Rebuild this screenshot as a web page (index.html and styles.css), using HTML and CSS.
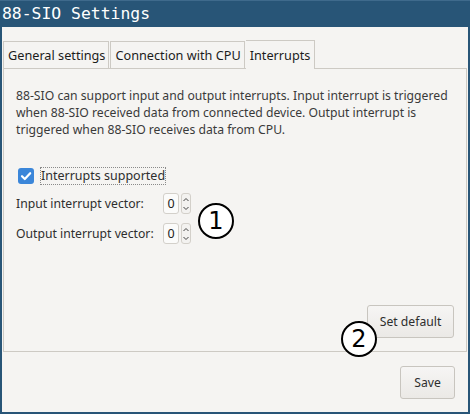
FILE: index.html
```html
<!DOCTYPE html>
<html>
<head>
<meta charset="utf-8">
<link rel="stylesheet" href="styles.css">
</head>
<body>
<div class="window">
  <div class="titlebar">88-SIO Settings</div>
  <div class="content">
    <div class="tabs">
      <div class="tab">General settings</div>
      <div class="tab">Connection with CPU</div>
      <div class="tab active">Interrupts</div>
    </div>
    <div class="pane">
      <p class="desc">88-SIO can support input and output interrupts. Input interrupt is triggered when 88-SIO received data from connected device. Output interrupt is triggered when 88-SIO receives data from CPU.</p>
      <div class="check-row">
        <span class="checkbox">
          <svg width="12" height="12" viewBox="0 0 12 12"><path d="M2 6.2 L4.8 9 L10.2 3.2" fill="none" stroke="#fff" stroke-width="2.2" stroke-linecap="round" stroke-linejoin="round"/></svg>
        </span>
        <span class="check-label">Interrupts supported</span>
      </div>
      <div class="form">
        <span class="flabel">Input interrupt vector:</span>
        <span class="spin"><span class="spin-val">0</span><span class="spin-btns"><svg width="8" height="18" viewBox="0 0 8 18"><path d="M1.5 6 L4 3.5 L6.5 6" fill="none" stroke="#444" stroke-width="1"/><path d="M1.5 12 L4 14.5 L6.5 12" fill="none" stroke="#444" stroke-width="1"/></svg></span></span>
        <span class="flabel">Output interrupt vector:</span>
        <span class="spin"><span class="spin-val">0</span><span class="spin-btns"><svg width="8" height="18" viewBox="0 0 8 18"><path d="M1.5 6 L4 3.5 L6.5 6" fill="none" stroke="#444" stroke-width="1"/><path d="M1.5 12 L4 14.5 L6.5 12" fill="none" stroke="#444" stroke-width="1"/></svg></span></span>
      </div>
      <div class="spacer"></div>
      <div class="pane-actions">
        <button class="btn btn-default">Set default</button>
      </div>
      <div class="marker m1">1</div>
    </div>
    <div class="actions">
      <button class="btn btn-save">Save</button>
    </div>
    <div class="marker m2">2</div>
  </div>
</div>
</body>
</html>
```
FILE: styles.css
```css
html, body {
  margin: 0;
  padding: 0;
  background: #285577;
}
.window {
  width: 470px;
  height: 414px;
  display: flex;
  flex-direction: column;
  background: #285577;
  box-sizing: border-box;
}
.titlebar {
  height: 27px;
  box-sizing: border-box;
  border-top: 1px solid #3f6a8c;
  padding-left: 2px;
  font-family: "DejaVu Sans Mono", monospace;
  font-size: 16.4px;
  line-height: 25px;
  color: #ffffff;
}
.content {
  position: relative;
  flex: 1;
  margin: 0 2px 2px 2px;
  background: #f5f4f2;
  padding: 13px 1px 0 1px;
  display: flex;
  flex-direction: column;
  font-family: "Noto Sans", sans-serif;
  font-size: 12.2px;
  color: #2e2e2e;
}
.tabs {
  display: flex;
  align-items: flex-end;
  height: 28px;
  box-sizing: border-box;
}
.tab {
  height: 27px;
  box-sizing: border-box;
  border: 1px solid #cdcac4;
  border-bottom: none;
  padding: 0 3px 0 4px;
  font-size: 12.7px;
  line-height: 26px;
  white-space: nowrap;
  color: #1c1c1c;
  margin-right: 1px;
}
.tab.active {
  height: 29px;
  margin-bottom: -1px;
  background: #f5f4f2;
  border-left: none;
  position: relative;
  z-index: 1;
  padding: 0 4px 0 4px;
  line-height: 28px;
}
.pane {
  position: relative;
  height: 284px;
  box-sizing: border-box;
  border: 1px solid #cdcac4;
  padding: 18px 12px 13px 12px;
  display: flex;
  flex-direction: column;
}
.desc {
  margin: 0;
  line-height: 17px;
  color: #3a3a3a;
}
.check-row {
  display: flex;
  align-items: center;
  margin-top: 29px;
  margin-left: 2px;
  gap: 6px;
}
.checkbox {
  width: 16px;
  height: 16px;
  border-radius: 3px;
  background: #3b86d9;
  display: flex;
  align-items: center;
  justify-content: center;
}
.check-label {
  border: 1px dotted #8a8a8a;
  line-height: 16px;
  font-size: 12.5px;
  color: #2e2e2e;
}
.form {
  display: grid;
  grid-template-columns: 147px auto;
  align-items: center;
  row-gap: 9px;
  margin-top: 8px;
  justify-content: start;
}
.flabel {
  color: #2e2e2e;
}
.spin {
  display: flex;
  gap: 2px;
  height: 21px;
}
.spin-val {
  width: 16px;
  box-sizing: border-box;
  border: 1px solid #d3d0ca;
  border-radius: 3px;
  background: #fbfbfa;
  text-align: center;
  line-height: 19px;
  font-size: 12.5px;
  color: #222;
}
.spin-btns {
  width: 10px;
  box-sizing: border-box;
  border: 1px solid #d3d0ca;
  border-radius: 3px;
  background: #f3f2f0;
  display: flex;
  align-items: center;
  justify-content: center;
}
.spacer {
  flex: 1;
}
.pane-actions {
  display: flex;
  justify-content: flex-end;
}
.btn {
  font-family: "Noto Sans", sans-serif;
  font-size: 12.2px;
  color: #2e2e2e;
  border: 1px solid #c8c5bf;
  border-radius: 3px;
  background: linear-gradient(#f6f5f4, #ebe9e6);
  height: 33px;
  padding: 0;
  margin: 0;
  white-space: nowrap;
}
.btn-default {
  width: 87px;
}
.btn-save {
  width: 55px;
}
.actions {
  display: flex;
  justify-content: flex-end;
  padding: 14px 12px 0 0;
}
.marker {
  position: absolute;
  width: 36px;
  height: 36px;
  box-sizing: border-box;
  border: 2px solid #000;
  border-radius: 50%;
  background: #fff;
  font-family: "DejaVu Sans", sans-serif;
  font-size: 24px;
  line-height: 32px;
  text-align: center;
  color: #000;
  z-index: 2;
}
.m1 {
  left: 194px;
  top: 134px;
}
.m2 {
  left: 339px;
  top: 294px;
}
```
